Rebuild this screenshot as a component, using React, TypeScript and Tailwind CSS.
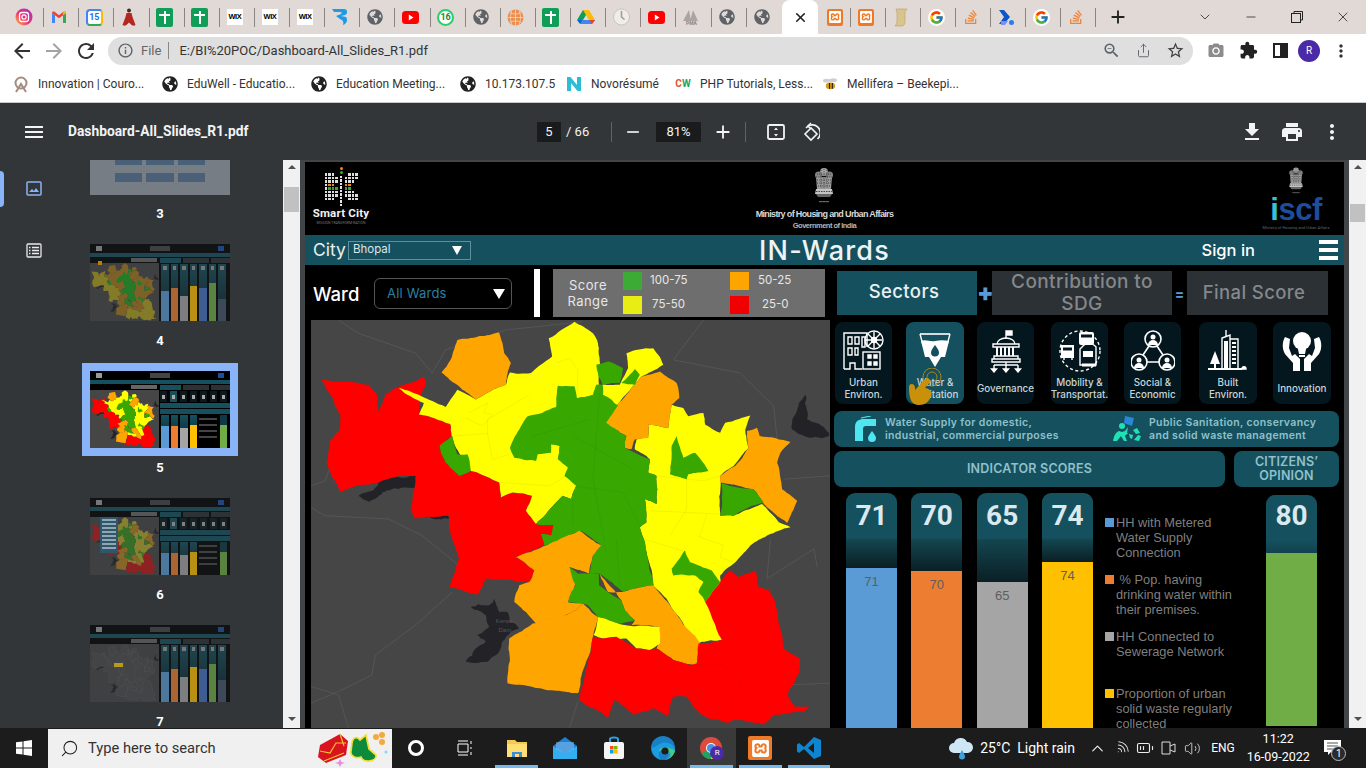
import React from 'react';
import { FaGlobeAmericas, FaStackOverflow } from 'react-icons/fa';
import { FcGoogle } from 'react-icons/fc';
import { SiXampp } from 'react-icons/si';
import {
  MdAdd, MdArrowBack, MdArrowForward, MdCameraAlt, MdExtension, MdFileDownload, MdInfoOutline,
  MdMenu, MdMoreVert, MdPrint, MdRefresh, MdRemove, MdStarBorder, MdZoomOut,
} from 'react-icons/md';
import { BatteryMedium, ChevronDown, ChevronUp, Minus, Search, Share, Volume2, Wifi, X } from 'lucide-react';

// map regions, in 3x coordinates of the map panel
const rawRegions: { c: 'r' | 'o' | 'y' | 'g'; d: string }[] = [
  { c: 'r', d: '50,180 190,195 215,225 220,275 240,225 270,205 355,170 362,190 345,228 340,285 435,315 438,350 402,380 420,430 460,470 495,455 580,490 585,535 620,520 678,530 660,575 690,615 742,618 735,650 705,645 715,680 630,715 685,755 670,790 540,780 515,828 432,805 460,720 430,620 430,590 325,598 315,570 332,470 280,470 220,490 105,518 65,430 75,365 105,330 105,285' },
  { c: 'y', d: '280,205 420,262 455,210 510,240 600,195 612,158 675,160 738,110 728,55 805,5 860,40 875,70 878,195 950,300 850,450 810,500 795,540 770,530 720,585 690,615 660,575 678,530 620,520 585,535 580,490 495,455 460,400 438,350 435,315 340,285 355,250' },
  { c: 'y', d: '960,100 1040,85 1070,135 1005,170 975,205 930,258 890,225 888,195 940,195 965,145' },
  { c: 'y', d: '1095,255 1130,265 1145,290 1190,280 1195,315 1240,340 1255,310 1330,288 1315,330 1325,385 1280,440 1240,470 1240,590 1280,590 1340,565 1365,555 1415,610 1450,625 1380,650 1330,680 1290,725 1240,770 1245,965 1185,970 1170,975 1080,840 1040,800 1000,625 1020,610 1015,540 1050,555 1050,470 1025,460 1030,420 985,390 990,360 1025,355 1025,315 1085,325' },
  { c: 'o', d: '455,60 580,38 595,100 615,130 600,195 510,240 470,210 408,158 435,120' },
  { c: 'o', d: '1060,155 1110,190 1118,235 1095,255 1085,325 1025,315 1025,355 985,360 975,390 955,385 960,350 900,310 975,205 1005,170' },
  { c: 'o', d: '1320,335 1350,325 1358,350 1450,368 1420,400 1410,430 1425,510 1470,545 1440,612 1370,555 1340,510 1240,490 1240,470 1285,440 1325,385' },
  { c: 'g', d: '755,198 805,200 812,235 860,225 870,195 888,195 890,225 935,258 900,310 960,350 955,385 1030,420 1025,460 1050,470 1050,555 1015,540 1020,610 1000,625 1020,700 1042,800 950,820 880,765 850,765 860,710 885,680 825,635 785,650 750,670 715,680 705,645 735,650 742,618 690,615 720,585 770,530 795,540 810,500 775,470 785,445 755,420 760,380 735,375 735,400 695,405 690,425 625,415 612,385 640,330 665,290 750,262' },
  { c: 'g', d: '870,135 905,125 950,145 940,190 888,195' },
  { c: 'g', d: '945,190 985,148 1000,165 985,195' },
  { c: 'g', d: '402,380 440,350 455,405 485,405 495,455 460,470 420,430' },
  { c: 'g', d: '1090,465 1095,380 1110,350 1130,415 1165,400 1205,455 1145,465 1140,480' },
  { c: 'g', d: '1245,492 1340,510 1370,550 1305,575 1280,590 1240,590' },
  { c: 'g', d: '1095,750 1135,695 1150,730 1215,755 1240,790 1195,850 1175,820 1190,790 1165,770 1100,770' },
  { c: 'o', d: '630,715 720,680 820,635 885,680 860,710 848,765 790,745 808,790 785,850 830,855 790,885 690,915 625,850 640,800 670,790 685,755' },
  { c: 'o', d: '680,915 790,885 830,855 875,895 860,955 818,1120 815,1125 700,1110 605,1095 610,960' },
  { c: 'o', d: '880,765 905,820 950,820 1040,800 1090,860 1180,975 1170,1040 1100,1025 1050,990 1060,925 975,920 985,905 955,875 945,845' },
  { c: 'g', d: '790,745 815,765 845,765 878,765 878,800 905,820 945,845 955,875 985,905 935,915 875,895 845,860 785,850 795,820 808,800' },
  { c: 'y', d: '875,895 935,915 1060,925 1060,975 1030,995 990,990 960,960 890,960 862,950' },
  { c: 'r', d: '860,955 890,960 930,955 990,990 1030,995 1050,990 1100,1025 1150,1040 1170,1035 1175,975 1245,965 1195,850 1240,790 1270,755 1295,775 1345,755 1355,805 1385,815 1405,850 1430,990 1478,1020 1475,1065 1440,1130 1460,1165 1505,1165 1490,1180 1400,1190 1370,1220 1320,1210 1280,1205 1260,1215 1200,1200 1160,1165 1140,1135 1100,1135 1085,1195 1040,1170 980,1190 925,1145 905,1200 870,1175 818,1145' },
];

const rawWater = [
  '495,865 550,860 565,840 580,880 605,880 610,910 640,930 600,955 580,1000 545,1030 480,1030 510,990 540,970 515,950 550,925 540,890',
  '160,530 220,490 250,465 330,470 330,505 290,505 190,548',
  '1455,310 1475,250 1495,225 1500,300 1565,340 1565,350 1480,345 1455,330',
  '370,592 430,582 430,600',
];

// the ward shapes have ragged edges: split long edges and nudge the midpoints.
// The nudge depends only on the midpoint, so two regions sharing an edge stay together.
function roughen(points: string, amount = 0.05) {
  const pts = points.split(' ').map(p => p.split(',').map(Number));
  const noise = (x: number, y: number) => {
    const v = Math.sin(x * 12.9898 + y * 78.233) * 43758.5453;
    return (v - Math.floor(v)) * 2 - 1;
  };
  const split = (a: number[], b: number[], out: number[][]) => {
    const len = Math.hypot(b[0] - a[0], b[1] - a[1]);
    if (len < 12) return;
    const mx = (a[0] + b[0]) / 2;
    const my = (a[1] + b[1]) / 2;
    const m = [mx + noise(mx, my) * len * amount, my + noise(my, mx) * len * amount];
    split(a, m, out);
    out.push(m);
    split(m, b, out);
  };
  const out: number[][] = [];
  pts.forEach((p, i) => {
    out.push(p);
    split(p, pts[(i + 1) % pts.length], out);
  });
  return out.map(p => `${p[0].toFixed(1)},${p[1].toFixed(1)}`).join(' ');
}

const regions = rawRegions.map(r => ({ c: r.c, d: roughen(r.d) }));
const water = rawWater.map(w => roughen(w, 0.12));

const roads = [
  'M100 0 L160 40 L330 100 L380 160 L420 90 L600 30 L830 5',
  'M1190 0 L1100 120 L1300 160 L1400 260 L1410 360',
  'M18 500 L60 485 L80 430',
  'M18 565 L60 590 L250 600 L350 650 L460 740',
  'M440 820 L330 920 L210 1010 L200 1070 L100 1120 L18 1155',
  'M18 1105 L100 1130 L130 1230',
  'M1390 660 L1380 780 L1520 690 L1530 745',
  'M815 1150 L790 1230',
  'M1430 480 L1568 470',
  'M1440 1100 L1568 1095',
];

const wards = [
  'M440 350 L545 342 L560 420 L610 405', 'M545 342 L545 300 L670 225', 'M480 295 L530 320 L560 285 L535 280 L545 250 L490 280',
  'M580 490 L730 500 L780 470', 'M1052 470 L1190 485 L1240 470', 'M1140 480 L1140 570 L1090 650', 'M1030 575 L1240 585',
  'M1012 660 L1140 700', 'M1170 650 L1250 680 L1240 715 L1280 730', 'M1200 585 L1180 650', 'M1150 1040 L1250 1040 L1305 1090 L1270 1150 L1290 1200',
  'M812 235 L815 150 L790 115 L750 130', 'M800 500 L950 520 L1000 620', 'M800 350 L980 450', 'M880 220 L860 480 L900 700', 'M680 350 L850 300', 'M800 540 L800 620', 'M930 660 L940 800',
];

const fillOf = { r: '#ff0000', o: '#ffa500', y: '#ffff00', g: '#38a800' };

function MapShapes({ palette = fillOf, boundaries = true, edge }: { palette?: Record<string, string>; boundaries?: boolean; edge?: string }) {
  return (
    <>
      {roads.map((d, i) => <path key={i} d={d} fill="none" stroke="#585858" strokeWidth="2.500" />)}
      {water.map((p, i) => <polygon key={i} points={p} fill="#222227" />)}
      {regions.map((r, i) => <polygon key={i} points={r.d} fill={palette[r.c]} stroke={edge ?? 'none'} strokeWidth={edge ? 8 : 0} />)}
      {boundaries && wards.map((d, i) => <path key={i} d={d} fill="none" stroke="#000" strokeOpacity="0.08" strokeWidth="2" />)}
    </>
  );
}

function Globe({ className = 'text-[#5f6368]' }: { className?: string }) {
  return <FaGlobeAmericas className={`w-4 h-4 ${className}`} />;
}

function TabIcon({ kind }: { kind: string }) {
  switch (kind) {
    case 'insta':
      return (
        <svg width="18" height="18" viewBox="0 0 18 18">
          <defs>
            <linearGradient id="ig" x1="0" y1="1" x2="1" y2="0">
              <stop offset="0" stopColor="#fdc04a" /><stop offset="0.45" stopColor="#f0316e" /><stop offset="1" stopColor="#a02fd0" />
            </linearGradient>
          </defs>
          <circle cx="9" cy="9" r="8.5" fill="url(#ig)" />
          <rect x="4.5" y="4.5" width="9" height="9" rx="2.5" fill="none" stroke="#fff" strokeWidth="1.3" />
          <circle cx="9" cy="9" r="2.1" fill="none" stroke="#fff" strokeWidth="1.2" />
        </svg>
      );
    case 'gmail':
      return (
        <svg width="18" height="18" viewBox="0 0 18 18">
          <path d="M2 15V5l3 2.2V15z" fill="#4285f4" />
          <path d="M13 15V7.2L16 5v10z" fill="#34a853" />
          <path d="M2 5c0-1.5 1.6-2 2.6-1.2L9 7.2l4.4-3.4C14.4 3 16 3.5 16 5l-7 5.3z" fill="#ea4335" />
          <path d="M13 7.2 16 5c0-1-.6-1.6-1.4-1.7L13 4.5z" fill="#fbbc04" />
        </svg>
      );
    case 'cal':
      return (
        <div className="w-[17px] h-[17px] bg-white border-[2px] border-[#4285f4] border-b-[#34a853] border-r-[#fbbc04] rounded-sm flex items-center justify-center text-[9px] text-[#1a73e8] font-bold leading-none">15</div>
      );
    case 'dress':
      return (
        <svg width="18" height="20" viewBox="0 0 18 20">
          <circle cx="9" cy="3.5" r="2" fill="#4a2a20" />
          <path d="M6.5 6h5l1 4 3 8c-2 1.2-3.5.6-4.5-.5L9 15.5l-2 2c-1 1.1-2.500 1.700-4.500.5l3-8z" fill="#b3271e" />
        </svg>
      );
    case 'sheet':
      return (
        <div className="w-[17px] h-[19px] bg-[#0f9d58] rounded-[2px] relative">
          <div className="absolute left-[7.5px] top-[3px] w-[2px] h-[13px] bg-white" />
          <div className="absolute left-[3px] top-[6px] w-[11px] h-[2px] bg-white" />
        </div>
      );
    case 'wix':
      return <div className="w-4 h-4 bg-white flex items-center justify-center text-[7.5px] font-bold text-black tracking-[-0.5px] font-['Liberation_Sans',sans-serif]">WIX</div>;
    case 'swirl':
      return (
        <svg width="18" height="20" viewBox="0 0 18 20">
          <path d="M1 2h12c4 0 4 5 1 6l-4 1 5 1c2 2 1 7-3 8 1-3 0-5-3-6L5 9l5-2c1-1 1-2-1-2H3z" fill="#1e9be6" />
        </svg>
      );
    case 'globe':
      return <Globe />;
    case 'yt':
      return (
        <svg width="17" height="13" viewBox="0 0 17 13">
          <rect width="17" height="13" rx="3.5" fill="#f00" />
          <path d="M6.8 3.500 11.500 6.500 6.800 9.500z" fill="#fff" />
        </svg>
      );
    case 'wa':
      return <div className="w-[17px] h-[17px] rounded-full bg-white border-[2px] border-[#25d366] flex items-center justify-center text-[9px] font-bold text-[#128c40] leading-none">16</div>;
    case 'orange':
      return (
        <svg width="17" height="17" viewBox="0 0 17 17">
          <circle cx="8.500" cy="8.500" r="8" fill="#ea8d4f" />
          <path d="M.5 8.500h16M8.500.5v16M3 3.500c3 2 8 2 11 0M3 13.500c3-2 8-2 11 0M5 1.500c-2 4-2 10 0 14M12 1.500c2 4 2 10 0 14" stroke="#f7d5bd" strokeWidth=".8" fill="none" />
        </svg>
      );
    case 'drive':
      return (
        <svg width="18" height="16" viewBox="0 0 18 16">
          <path d="M6 1h6l-6 10H0z" fill="#0f9d58" />
          <path d="M6 1h6l6 10h-6z" fill="#fbbc04" />
          <path d="M3 15l3-4h12l-3 4z" fill="#4285f4" />
          <path d="M0 11h6l-3 4z" fill="#0066da" />
          <path d="M15 15l3-4h-6z" fill="#ea4335" />
        </svg>
      );
    case 'clock':
      return (
        <svg width="17" height="18" viewBox="0 0 17 18">
          <circle cx="8.500" cy="9" r="8" fill="#efecea" stroke="#c7c3c0" />
          <path d="M8.500 3v6l3 2.500" stroke="#9c9a98" strokeWidth="1.500" fill="none" />
        </svg>
      );
    case 'pma':
      return (
        <div className="flex flex-col items-center leading-none text-[#8b8584]">
          <svg width="18" height="12" viewBox="0 0 18 12"><path d="M1 12 7 1l2 11zM8 12 11 1l5 11z" fill="#aaa5a3" /></svg>
          <span className="text-[5px] font-bold">PMA</span>
        </div>
      );
    case 'xampp':
      return <div className="w-[16px] h-[17px] bg-[#ee7a27] rounded-[2px] flex items-center justify-center"><SiXampp className="w-3 h-3 text-white" /></div>;
    case 'scroll':
      return (
        <svg width="16" height="19" viewBox="0 0 16 19">
          <path d="M3 1h11l-2 3v10c0 2-1 4-3 4H2c1-1 2-3 2-5V5z" fill="#d9c48e" stroke="#b8a269" strokeWidth=".6" />
        </svg>
      );
    case 'g':
      return <div className="w-[17px] h-[17px] rounded-full bg-white flex items-center justify-center"><FcGoogle className="w-[15px] h-[15px]" /></div>;
    case 'so':
      return <FaStackOverflow className="w-4 h-4 text-[#ef8236]" />;
    case 'pa':
      return (
        <svg width="18" height="18" viewBox="0 0 18 18">
          <path d="M2 2h5l6 7-6 7H2l5-7z" fill="#0c56c9" />
          <path d="M4 13h7l-3 4H4z" fill="#7b8ff0" />
          <circle cx="14.500" cy="14.500" r="2.500" fill="#2b7de9" />
        </svg>
      );
    default:
      return null;
  }
}

const tabsBefore = ['insta', 'gmail', 'cal', 'dress', 'sheet', 'sheet', 'wix', 'wix', 'wix', 'swirl', 'globe', 'yt', 'wa', 'globe', 'orange', 'sheet', 'drive', 'clock', 'yt', 'pma', 'globe', 'globe'];
const tabsAfter = ['xampp', 'xampp', 'scroll', 'g', 'so', 'pa', 'g', 'so'];

function TabStrip() {
  return (
    <div className="h-[34px] bg-[#e0d9d6] flex items-center pl-[9px] shrink-0">
      {tabsBefore.map((k, i) => (
        <div key={i} className="w-[35.14px] h-[34px] pr-[5px] flex items-center justify-center relative">
          <TabIcon kind={k} />
          {i < 21 && <div className="absolute right-0 top-[8px] h-[19px] w-px bg-[#8a8583]" />}
        </div>
      ))}
      <div className="w-[36.5px] h-[34px] bg-white rounded-t-lg flex items-center justify-center">
        <X className="w-[15px] h-[15px] text-[#222]" strokeWidth={2.5} />
      </div>
      {tabsAfter.map((k, i) => (
        <div key={i} className={`${i === 0 ? 'w-[33px] pr-0' : 'w-[35px] pr-[5px]'} h-[34px] flex items-center justify-center relative`}>
          <TabIcon kind={k} />
          <div className="absolute right-0 top-[8px] h-[19px] w-px bg-[#8a8583]" />
        </div>
      ))}
      <div className="w-[11px]" />
      <MdAdd className="w-[22px] h-[22px] text-[#222]" />
      <div className="flex-1" />
      <div className="w-[46px] flex justify-center"><ChevronDown className="w-[16px] h-[16px] text-[#333]" strokeWidth={1.3} /></div>
      <div className="w-[46px] flex justify-center"><Minus className="w-[14px] h-[14px] text-[#222]" strokeWidth={1.3} /></div>
      <div className="w-[46px] flex justify-center">
        <svg width="12" height="12" viewBox="0 0 12 12" fill="none" stroke="#222"><rect x=".5" y="2.500" width="9" height="9" /><path d="M3 2.500V.5h8.500v8.500h-2" /></svg>
      </div>
      <div className="w-[46px] flex justify-center"><X className="w-[16px] h-[16px] text-[#222]" strokeWidth={1.2} /></div>
    </div>
  );
}

function Toolbar() {
  return (
    <div className="h-[33px] bg-white flex items-center shrink-0 pl-[10px]">
      <MdArrowBack className="w-6 h-6 text-[#333]" />
      <MdArrowForward className="w-6 h-6 text-[#a3a3a3] ml-2" />
      <MdRefresh className="w-6 h-6 text-[#333] ml-2" />
      <div className="ml-[10px] w-[1085px] h-[28px] rounded-full bg-[#dfdfdf] flex items-center pl-[9px] pr-[8px] text-[13px]">
        <MdInfoOutline className="w-[17px] h-[17px] text-[#5f6368]" />
        <span className="ml-[7px] text-[#666]">File</span>
        <div className="ml-[7px] w-px h-[17px] bg-[#888]" />
        <span className="ml-[10px] text-[#333]">E:/BI%20POC/Dashboard-All_Slides_R1.pdf</span>
        <div className="flex-1" />
        <MdZoomOut className="w-[19px] h-[19px] text-[#5f6368]" />
        <Share className="w-[15px] h-[15px] text-[#5f6368] ml-[15px]" strokeWidth={1.5} />
        <MdStarBorder className="w-[19px] h-[19px] text-[#444] ml-[15px]" />
      </div>
      <MdCameraAlt className="w-[18px] h-[18px] text-[#8c8c8c] ml-[14px]" />
      <MdExtension className="w-[19px] h-[19px] text-[#222] ml-[14px]" />
      <div className="w-[15px] h-[15px] border-[2px] border-[#222] ml-[15px] flex justify-end"><div className="w-[6px] h-full bg-[#222]" /></div>
      <div className="w-[22px] h-[22px] rounded-full bg-[#4b2aa8] text-white text-[10px] flex items-center justify-center ml-[10px]">R</div>
      <MdMoreVert className="w-[20px] h-[20px] text-[#333] ml-[11px]" />
    </div>
  );
}

function Bookmarks() {
  const items = [
    { w: 'w-[149px]', t: 'Innovation | Couro...', icon: <svg width="16" height="17" viewBox="0 0 16 17" fill="none" stroke="#a38d80" strokeWidth="2"><circle cx="8" cy="7" r="5.500" /><path d="M3 16 8 8l5 8" /></svg> },
    { w: 'w-[149px]', t: 'EduWell - Educatio...', icon: <Globe className="text-[#222]" /> },
    { w: 'w-[149px]', t: 'Education Meeting...', icon: <Globe className="text-[#222]" /> },
    { w: 'w-[106px]', t: '10.173.107.5', icon: <Globe className="text-[#222]" /> },
    { w: 'w-[109px]', t: 'Novorésumé', icon: <svg width="16" height="16" viewBox="0 0 16 16"><path d="M1 1h3.500L11 9V1h4v14h-3.500L5 7v8H1z" fill="#2cbcd6" /></svg> },
    { w: 'w-[147px]', t: 'PHP Tutorials, Less...', icon: <span className="text-[10px] font-bold leading-none"><span className="text-[#e2552b]">C</span><span className="text-[#1e9f6a]">W</span></span> },
    { w: 'w-[160px]', t: 'Mellifera – Beekepi...', icon: <svg width="17" height="14" viewBox="0 0 17 14"><ellipse cx="9" cy="9" rx="5" ry="3.500" fill="#d99a1d" /><path d="M8 6v6M11 6v6" stroke="#222" strokeWidth="1.200" /><ellipse cx="5" cy="3.500" rx="4" ry="2" fill="#cfcfcf" /><ellipse cx="12" cy="3" rx="4" ry="2" fill="#cfcfcf" /></svg> },
  ];
  return (
    <div className="h-[36px] bg-white border-b border-[#c9c9c9] flex items-center pl-[13px] pb-px text-[12px] text-[#333] shrink-0">
      {items.map(it => (
        <div key={it.t} className={`${it.w} flex items-center gap-[9px] shrink-0`}>
          <div className="w-4 flex justify-center shrink-0">{it.icon}</div>
          <span className="whitespace-nowrap">{it.t}</span>
        </div>
      ))}
    </div>
  );
}

function PdfToolbar() {
  return (
    <div className="h-[57px] bg-[#323639] flex items-center text-[#f1f3f4] shrink-0">
      <MdMenu className="w-6 h-6 ml-[22px]" />
      <span className="ml-[22px] text-[13.800px] font-bold w-[469px] whitespace-nowrap">Dashboard-All_Slides_R1.pdf</span>
      <div className="w-[24px] h-[20px] bg-[#191b1c] flex items-center justify-center text-[13px]">5</div>
      <span className="ml-[5px] text-[13px] w-[45px]">/ 66</span>
      <div className="w-px h-[20px] bg-[#5f6368]" />
      <MdRemove className="w-[20px] h-[20px] ml-[11px]" />
      <div className="ml-[13px] w-[45px] h-[20px] bg-[#191b1c] flex items-center justify-center text-[13px]">81%</div>
      <MdAdd className="w-[22px] h-[22px] ml-[11px]" />
      <div className="w-px h-[20px] bg-[#5f6368] ml-[11px]" />
      <svg className="ml-[21px]" width="18" height="18" viewBox="0 0 18 18" fill="none" stroke="#f1f3f4" strokeWidth="1.800">
        <rect x="1" y="2" width="16" height="14" rx="1.500" />
        <path d="M9 4.500 11 7H7zM9 13.500 11 11H7z" fill="#f1f3f4" stroke="none" />
      </svg>
      <svg className="ml-[17px]" width="18" height="20" viewBox="0 0 18 20" fill="none" stroke="#f1f3f4" strokeWidth="1.600">
        <path d="M9 6 3 12l6 6 6-6z" />
        <path d="M4 6A8 8 0 1 1 15.500 17" />
        <path d="M9 1 6 4l3 3" />
      </svg>
      <div className="flex-1" />
      <MdFileDownload className="w-6 h-6 mr-[16px]" />
      <MdPrint className="w-6 h-6 mr-[16px]" />
      <MdMoreVert className="w-6 h-6 mr-[22px]" />
    </div>
  );
}

function MiniSlide({ mode }: { mode: 'dim4' | 'active' | 'dim6' | 'dim7' }) {
  const seven = mode === 'dim4' || mode === 'dim7';
  const palette4 = { r: '#b0a020', o: '#a8781c', y: '#a8781c', g: '#20a020' };
  const palette6 = { r: '#c01818', o: '#b5801f', y: '#b5a82c', g: '#3a8f1f' };
  const blank = { r: '#4c4c4c', o: '#4c4c4c', y: '#4c4c4c', g: '#4c4c4c' };
  const palette = mode === 'dim4' ? palette4 : mode === 'dim6' ? palette6 : mode === 'dim7' ? blank : fillOf;
  const colors = seven
    ? ['#5b9bd5', '#ed7d31', '#a5a5a5', '#ffc000', '#4472c4', '#70ad47', '#44546a']
    : ['#5b9bd5', '#ed7d31', '#a5a5a5', '#ffc000'];
  const heights = seven ? ['h-[52%]', 'h-[58%]', 'h-[44%]', 'h-[62%]', 'h-[58%]', 'h-[66%]', 'h-[38%]'] : ['h-[68%]', 'h-[66%]', 'h-[62%]', 'h-[70%]'];
  return (
    <div className="w-[140px] h-[77px] bg-black relative overflow-hidden flex flex-col shrink-0">
      <div className="h-[9px] flex items-center justify-between px-[6px]">
        <div className="w-[6px] h-[5px] bg-[#999]" />
        <div className="w-[20px] h-[5px] bg-[#444]" />
        <div className="w-[6px] h-[5px] bg-[#1d4d9e]" />
      </div>
      <div className="h-[4px] bg-[#15505e]" />
      <div className="flex flex-1 min-h-0">
        <div className="w-[70px] flex flex-col">
          <div className="h-[6px] flex items-center justify-end pr-[2px]"><div className="w-[26px] h-[4px] bg-[#666]" /></div>
          <svg className="w-full flex-1" viewBox="18 0 1550 1230" preserveAspectRatio="none">
            <rect x="18" width="1550" height="1230" fill="#464646" />
            <MapShapes palette={palette} boundaries={false} edge={mode === 'dim7' ? '#6a6a6a' : undefined} />
          </svg>
        </div>
        <div className="flex-1 flex flex-col pl-px">
          <div className="h-[6px] flex gap-[2px] items-center">
            <div className="w-[21px] h-[5px] bg-[#15505e]" /><div className="w-[26px] h-[5px] bg-[#2b3135]" /><div className="w-[19px] h-[5px] bg-[#2b3135]" />
          </div>
          {!seven && (
            <>
              <div className="h-[11px] flex gap-[3px] mt-px">
                {[0, 1, 2, 3, 4, 5, 6].map(i => <div key={i} className={`w-[7px] ${i === 1 ? 'bg-[#15505e]' : 'bg-[#0c1a1e]'} flex items-center justify-center`}><div className="w-[3px] h-[4px] bg-[#aaa]" /></div>)}
              </div>
              <div className="h-[5px] mt-px bg-[#15505e]" />
              <div className="h-[5px] mt-px bg-[#15505e]" />
            </>
          )}
          <div className="flex-1 flex gap-[2px] items-stretch mt-px px-px">
            {colors.map((c, i) => (
              <div key={i} className="w-[7.500px] flex flex-col justify-end bg-[linear-gradient(#15505e,#0a1a20)] relative">
                {seven && <div className="absolute top-[2px] left-[2px] w-[3.500px] h-[4px] bg-[#999]" />}
                <div className={heights[i]} style={{ backgroundColor: c }} />
              </div>
            ))}
            {!seven && (
              <>
                <div className="w-[18px] flex flex-col gap-[4px] pt-[3px]">
                  {[0, 1, 2, 3].map(i => <div key={i} className="h-[2px] bg-[#444]" />)}
                </div>
                <div className="w-[7px] flex flex-col justify-end bg-[#0f3844] ml-auto mr-[2px]"><div className="h-[70%] bg-[#70ad47]" /></div>
              </>
            )}
          </div>
        </div>
      </div>
      {mode !== 'active' && <div className="absolute inset-0 bg-[#323639]/35" />}
      {mode === 'dim6' && (
        <div className="absolute left-[10px] top-[19px] w-[18px] h-[36px] bg-[#31566a] flex flex-col gap-[2px] p-[2px]">
          {[0, 1, 2, 3, 4, 5, 6, 7].map(i => <div key={i} className="h-[2px] bg-[#8fa7b3]" />)}
        </div>
      )}
      {mode === 'dim7' && <div className="absolute left-[24px] top-[38px] w-[9px] h-[4px] bg-[#b89a1c]" />}
      {mode === 'dim4' && <div className="absolute left-[8px] top-[17px] w-[4px] h-[4px] bg-[#b57f10]" />}
    </div>
  );
}

function Sidebar() {
  const label = 'h-[38px] flex items-center justify-center pt-[2px] text-white text-[13px] font-bold shrink-0';
  return (
    <div className="w-[300px] bg-[#323639] flex shrink-0 overflow-hidden">
      <div className="w-[68px] relative shrink-0">
        <div className="absolute left-0 top-[11px] w-[4px] h-[36px] bg-[#8ab4f8] rounded-r" />
        <div className="flex flex-col items-center pt-[21px] gap-[47px]">
          <svg width="16" height="15" viewBox="0 0 16 15" fill="none" stroke="#8ab4f8" strokeWidth="1.500">
            <rect x="1" y="1" width="14" height="13" rx="1" />
            <path d="M3 11l3-3 2 2 2-3 3 4z" fill="#8ab4f8" stroke="none" />
          </svg>
          <svg width="16" height="15" viewBox="0 0 16 15" fill="none" stroke="#e8eaed" strokeWidth="1.300">
            <rect x="1" y="1" width="14" height="13" rx="1" />
            <path d="M6 4.500h7M6 7.500h7M6 10.500h7M3 4.500h1.500M3 7.500h1.500M3 10.500h1.500" strokeWidth="1.500" />
          </svg>
        </div>
      </div>
      <div className="w-[215px] flex flex-col shrink-0 pl-[22px]">
        <div className="w-[140px] h-[35px] bg-[#767d84] shrink-0 flex flex-col gap-[6px] px-[25px] overflow-hidden">
          <div className="flex gap-[4px]">
            {[0, 1, 2].map(i => <div key={i} className="flex-1 h-[5px] bg-[#4a6078]" />)}
          </div>
          <div className="flex gap-[4px] mt-[2px]">
            {[0, 1, 2].map(i => <div key={i} className="flex-1 h-[9px] bg-[#4a6078]" />)}
          </div>
        </div>
        <div className="h-[49px] w-[140px] flex items-start justify-center pt-[9px] text-white text-[13px] font-bold shrink-0">3</div>
        <MiniSlide mode="dim4" />
        <div className="h-[50px] w-[140px] pt-[10px] flex items-start justify-center text-white text-[13px] font-bold shrink-0">4</div>
        <div className="outline-8 outline-[#8ab4f8] w-[140px] shrink-0"><MiniSlide mode="active" /></div>
        <div className={`${label} w-[140px]`}>5</div>
        <div className="h-[12px] shrink-0" />
        <MiniSlide mode="dim6" />
        <div className={`${label} w-[140px]`}>6</div>
        <div className="h-[12px] shrink-0" />
        <MiniSlide mode="dim7" />
        <div className={`${label} w-[140px]`}>7</div>
      </div>
      <Scrollbar thumb="mt-[18px] h-[25px]" />
    </div>
  );
}

function Scrollbar({ thumb }: { thumb: string }) {
  return (
    <div className="w-[17px] bg-[#f1f1f1] flex flex-col items-center shrink-0 relative">
      <div className="mt-[5px] w-0 h-0 border-x-[4px] border-x-transparent border-b-[4px] border-b-[#505050]" />
      <div className={`${thumb} w-[15px] bg-[#c1c1c1]`} />
      <div className="flex-1" />
      <div className="mb-[7px] w-0 h-0 border-x-[4px] border-x-transparent border-t-[4px] border-t-[#505050]" />
    </div>
  );
}

function Emblem({ className }: { className?: string }) {
  return (
    <svg className={className} viewBox="0 0 24 38" fill="#8f8f8f">
      <circle cx="12" cy="5" r="4" fill="#a5a5a5" />
      <circle cx="6.500" cy="8" r="3.500" fill="#858585" />
      <circle cx="17.500" cy="8" r="3.500" fill="#858585" />
      <path d="M4 10h16l-1 12H5z" fill="#9a9a9a" />
      <path d="M5 7h14M4 10h16M5 13h14M5 16h14M6 19h12M9 3v18M12 2v20M15 3v18" stroke="#2c2c2c" strokeWidth=".8" strokeDasharray="1 1.200" />
      <path d="M4 22h16l1 5H3z" fill="#c4c4c4" />
      <path d="M4 24.500h16" stroke="#444" strokeWidth="1" strokeDasharray="1.500 1" />
      <path d="M4 27h16l-2 3H6z" fill="#666" />
      <rect x="7" y="34" width="10" height="1.200" fill="#666" />
    </svg>
  );
}

function SmartCityMark() {
  // left and right blocks of the dot mark
  const left = ['1110', '1111', '1111', '1110', '1111', '1111', '1111', '1110'];
  const right = ['0111', '1111', '1110', '1100', '1100', '1110', '1111', '0111'];
  const dotClass = (row: number, col: number, mirror: boolean) => {
    const inner = mirror ? col < 3 : col > 0;
    if (row === 3 && inner) return 'bg-[#e58a1f]';
    if (row === 4 && inner) return 'bg-[#3aa435]';
    return 'bg-[#dedede]';
  };
  const block = (rows: string[], mirror: boolean) => (
    <div className="flex flex-col gap-px">
      {rows.map((r, ri) => (
        <div key={ri} className="flex gap-px">
          {r.split('').map((c, ci) => <div key={ci} className={`w-[2.500px] h-[2.500px] ${c === '1' ? dotClass(ri, ci, mirror) : 'bg-transparent'}`} />)}
        </div>
      ))}
    </div>
  );
  return (
    <div className="flex items-center gap-[2px] h-[37px]">
      {block(left, false)}
      <div className="flex flex-col items-center gap-px">
        <div className="w-[3px] h-[3px] rounded-full bg-[#e58a1f]" />
        <div className="w-[3px] h-[3px] rounded-full bg-[#3aa435] mb-[1px]" />
        {[0, 1, 2, 3, 4, 5, 6, 7, 8].map(i => <div key={i} className="w-[2.500px] h-[2.500px] bg-[#e6e6e6]" />)}
      </div>
      {block(right, true)}
    </div>
  );
}

function SlideHeader() {
  return (
    <div className="h-[73px] bg-black grid grid-cols-[1fr_auto_1fr] shrink-0">
      <div className="pl-[7px] flex flex-col items-start">
        <div className="w-[58px] flex flex-col items-center pt-[6px]">
          <SmartCityMark />
          <span className="text-[11.500px] font-bold text-[#f2f2f2] leading-[13px] mt-[2px] whitespace-nowrap tracking-[0.2px]">Smart City</span>
          <span className="text-[3.500px] text-[#777] leading-[6px] whitespace-nowrap">MISSION TRANSFORM-NATION</span>
        </div>
      </div>
      <div className="flex flex-col items-center pt-[5px]">
        <Emblem className="w-[24px] h-[38px]" />
        <span className="mt-[3px] text-[9px] font-bold text-[#d9d9d9] leading-[12px] tracking-[-0.65px] font-['Liberation_Sans',sans-serif] whitespace-nowrap">Ministry of Housing and Urban Affairs</span>
        <span className="text-[7.500px] font-bold text-[#b5b5b5] leading-[11px] tracking-[-0.5px] font-['Liberation_Sans',sans-serif]">Government of India</span>
      </div>
      <div className="flex justify-end pr-[20px]">
        <div className="flex flex-col items-center w-[56px] pt-[4px]">
          <Emblem className="w-[18px] h-[30px]" />
          <span className="text-[31px] font-bold leading-[25px] tracking-[-0.5px] font-['Liberation_Sans',sans-serif] text-[#1d4d9e] mt-[1px]"><span className="text-[#36c1d8]">i</span>scf</span>
          <span className="mt-[3px] text-[4px] text-[#666] leading-[5px] whitespace-nowrap">Ministry of Housing and Urban Affairs</span>
        </div>
      </div>
    </div>
  );
}

function TitleBar() {
  return (
    <div className="h-[30px] bg-[#15505e] grid grid-cols-[1fr_auto_1fr] items-center shrink-0 font-['Inter',sans-serif] text-white">
      <div className="flex items-center pl-[8px]">
        <span className="text-[17.500px] text-[#e9f0f2] leading-none">City</span>
        <div className="ml-[2px] w-[123px] h-[19px] border border-[#5f8f9a] flex items-center justify-between pl-[4px] pr-[8px]">
          <span className="text-[11.500px] text-[#dbe7ea]">Bhopal</span>
          <div className="w-0 h-0 border-x-[5.500px] border-x-transparent border-t-[9px] border-t-white" />
        </div>
      </div>
      <span className="text-[27px] font-medium tracking-[1.200px] text-[#eef3f4] leading-none">IN-Wards</span>
      <div className="flex items-center justify-end pr-[6px]">
        <span className="text-[16.500px] font-medium leading-none">Sign in</span>
        <div className="ml-[64px] w-[19px] flex flex-col gap-[4px]">
          <div className="h-[4px] bg-white" /><div className="h-[4px] bg-white" /><div className="h-[4px] bg-white" />
        </div>
      </div>
    </div>
  );
}

function ScoreRange() {
  const sw = (cls: string) => <div className={`w-[19px] h-[18px] ${cls}`} />;
  return (
    <div className="ml-[13px] w-[272px] h-[48px] bg-[#6e6e6e] flex items-center text-[#e6e6e6] text-[11.500px]">
      <div className="w-[70px] text-center text-[13px] leading-[16px] tracking-[0.4px]">Score<br />Range</div>
      <div className="grid grid-cols-[107px_90px] gap-y-[6px]">
        <div className="flex items-center">{sw('bg-[#3cab35]')}<span className="ml-[8px]">100-75</span></div>
        <div className="flex items-center">{sw('bg-[#ffa500]')}<span className="ml-[9px]">50-25</span></div>
        <div className="flex items-center">{sw('bg-[#e8ed13]')}<span className="ml-[10px]">75-50</span></div>
        <div className="flex items-center">{sw('bg-[#f00000]')}<span className="ml-[13px]">25-0</span></div>
      </div>
    </div>
  );
}

function WardMap() {
  return (
    <svg className="ml-[6px] w-[519px] h-[410px] block" viewBox="18 0 1550 1230" preserveAspectRatio="none">
      <rect x="18" width="1550" height="1230" fill="#464646" />
      <MapShapes />
      <text x="595" y="914" fontSize="18" fill="#55555b" textAnchor="middle" fontFamily="Liberation Sans">Kerwa</text>
      <text x="597" y="940" fontSize="18" fill="#55555b" textAnchor="middle" fontFamily="Liberation Sans">Dam</text>
    </svg>
  );
}

const iconProps = { width: 44, height: 44, viewBox: '0 0 44 44', fill: 'none', stroke: '#fff', strokeWidth: 1.400 };

function SectorIcon({ name }: { name: string }) {
  switch (name) {
    case 'urban':
      return (
        <svg {...iconProps}>
          <path d="M2 40V4h23v14M2 40h6v-6h5v6h7" />
          <path d="M6 8h4v7H6zM13 8h4v7h-4zM20 8h3v10h-3zM6 19h4v7H6zM13 19h3v7h-3z" />
          <rect x="21" y="23" width="17" height="17" />
          <path d="M26 26h3v3h-3zM32 26h3v3h-3zM26 33h3v3h-3zM32 33h3v3h-3z" fill="#fff" />
          <circle cx="32" cy="11" r="9" />
          <path d="M32 3v16M24 11h16M26 5l12 12M38 5 26 17" />
          <circle cx="32" cy="11" r="2.500" fill="#fff" />
        </svg>
      );
    case 'water':
      return (
        <svg {...iconProps} strokeWidth={1.400}>
          <path d="M7 5h30" strokeWidth="1.600" />
          <path d="M8 12c5-2 9 1 14 0s9-1 14 0l-4 16h-4l-6 10-6-10h-4z" fill="#fff" stroke="none" />
          <path d="M22 16c2 3 4 5 4 7.500a4 4 0 0 1-8 0c0-2.500 2-4.500 4-7.500z" fill="#15505e" stroke="none" />
          <path d="M7 5l3 11M37 5l-3 11" />
        </svg>
      );
    case 'gov':
      return (
        <svg {...iconProps}>
          <path d="M22 2v8M22 2h6v4h-6z" fill="#fff" />
          <path d="M13 15a9 6 0 0 1 18 0zM9 15h26v3H9zM10 27h24v3H10zM8 30h28v3H8z" />
          <path d="M13 18v9M17 18v9M21 18v9M25 18v9M29 18v9" strokeWidth="2" />
          <path d="M22 33v9M10 36h24M10 36v5M34 36v5" />
          <path d="M7.500 40h5L10 43zM19.500 40h5L22 43zM31.500 40h5L34 43z" fill="#fff" />
        </svg>
      );
    case 'mobility':
      return (
        <svg {...iconProps}>
          <circle cx="22" cy="22" r="20" strokeDasharray="3 2.500" />
          <rect x="21" y="3" width="15" height="13" rx="2" fill="#fff" stroke="none" />
          <path d="M23 7h11" stroke="#04171e" strokeWidth="3" />
          <path d="M3 16h13v13H3z" fill="#fff" stroke="none" />
          <path d="M5 20h9" stroke="#04171e" strokeWidth="3" />
          <path d="M6 29v2M14 29v2M24 18a9 9 0 0 1 14 0v18H22V20z" />
          <path d="M25 22h10v6H25z" fill="#fff" stroke="none" />
          <path d="M24 36h14" strokeWidth="3" />
        </svg>
      );
    case 'social':
      return (
        <svg {...iconProps} strokeWidth={1.600}>
          <circle cx="22" cy="10" r="8" /><circle cx="8" cy="33" r="8" /><circle cx="36" cy="33" r="8" />
          <path d="M18 17 12 26M26 17l6 9M16 33h12" />
          {[[22, 8], [8, 31], [36, 31]].map(([x, y]) => (
            <g key={x}>
              <circle cx={x} cy={y} r="2.500" fill="#fff" stroke="none" />
              <path d={`M${x - 5} ${y + 8}a5 5 0 0 1 10 0z`} fill="#fff" stroke="none" />
            </g>
          ))}
        </svg>
      );
    case 'built':
      return (
        <svg {...iconProps}>
          <path d="M20 1v6M16 40V9l8-3v34zM24 10h8v30" />
          <path d="M18 12h4v27h-4z" fill="#fff" stroke="none" />
          <path d="M26 14h4M26 18h4M26 22h4M26 26h4M26 30h4M26 34h4" strokeWidth="1.800" />
          <path d="M9 22 14 35H4z" fill="#fff" stroke="none" />
          <path d="M9 35v5M2 40h34" strokeWidth="2" />
          <path d="M36 40c0-3 4-3 4 0z" fill="#fff" />
        </svg>
      );
    default:
      return (
        <svg {...iconProps}>
          <circle cx="22" cy="12" r="9" fill="#fff" stroke="none" />
          <path d="M18 20h8l-1 5h-6z" fill="#fff" stroke="none" />
          <path d="M19 27h6" strokeWidth="2" />
          <path d="M5 8c-3 5-3 12 0 17l8 9v8h7V30l-5-5-3 2-3-8 1-9z" fill="#fff" stroke="none" />
          <path d="M39 8c3 5 3 12 0 17l-8 9v8h-7V30l5-5 3 2 3-8-1-9z" fill="#fff" stroke="none" />
        </svg>
      );
  }
}

const sectors = [
  { n: 'urban', t: ['Urban', 'Environ.'], w: 'w-[57px]', ml: 'ml-[4px]' },
  { n: 'water', t: ['Water &', 'Sanitation'], w: 'w-[58px]', ml: 'ml-[14px]' },
  { n: 'gov', t: ['Governance'], w: 'w-[57px]', ml: 'ml-[13px]' },
  { n: 'mobility', t: ['Mobility &', 'Transportat.'], w: 'w-[57px]', ml: 'ml-[17px]' },
  { n: 'social', t: ['Social &', 'Economic'], w: 'w-[57px]', ml: 'ml-[16px]' },
  { n: 'built', t: ['Built', 'Environ.'], w: 'w-[58px]', ml: 'ml-[18px]' },
  { n: 'inno', t: ['Innovation'], w: 'w-[58px]', ml: 'ml-[16px]' },
];

function SectorTiles() {
  return (
    <div className="flex mt-[7px] h-[82px] shrink-0">
      {sectors.map(s => (
        <div key={s.n} className={`${s.w} ${s.ml} h-full rounded-lg ${s.n === 'water' ? 'bg-[#15505e]' : 'bg-[#04171e]'} flex flex-col items-center pt-[7px] relative shrink-0`}>
          <SectorIcon name={s.n} />
          <div className="flex-1 flex flex-col items-center justify-center text-[9.800px] leading-[11.500px] text-[#c8d6da] font-medium whitespace-nowrap">
            {s.t.map(l => <span key={l}>{l}</span>)}
          </div>
          {s.n === 'water' && (
            <svg className="absolute left-[1px] top-[46px]" width="36" height="38" viewBox="0 0 36 38">
              <circle cx="25" cy="9" r="5" fill="none" stroke="#c9910a" strokeWidth=".8" />
              <circle cx="25" cy="9" r="9" fill="none" stroke="#c9910a" strokeWidth=".8" />
              <path d="M2 19c0-4 6-4 6 1v2l10-11c3-3 7 1 4 4l-4 5c4 0 8 4 6 8-2 6-6 9-12 9-7 0-10-5-10-18z" fill="#c9910a" />
            </svg>
          )}
        </div>
      ))}
    </div>
  );
}

function InfoBar() {
  return (
    <div className="mt-[7px] ml-[3px] w-[505px] h-[36px] bg-[#15505e] rounded-lg flex items-center text-[#8fc1cc] text-[10.500px] font-semibold leading-[13px] tracking-[0.35px] shrink-0">
      <svg className="ml-[19px]" width="24" height="26" viewBox="0 0 24 26">
        <path d="M2 25V11c0-6 4-8 9-8h12v7H13c-2 0-3 1-3 3v12z" fill="#4fe6ef" />
        <path d="M8 2 18 0" stroke="#4fe6ef" strokeWidth="1.200" />
        <path d="M19 15c2 3 4 5 4 7a4 4 0 0 1-8 0c0-2 2-4 4-7z" fill="#4fe6ef" />
      </svg>
      <div className="ml-[8px] w-[226px] whitespace-nowrap">Water Supply for domestic,<br />industrial, commercial purposes</div>
      <svg width="32" height="28" viewBox="0 0 32 28">
        <path d="M14 1 23 3l-2 8-8-3z" fill="#2a86d8" />
        <circle cx="11" cy="11" r="3" fill="#1de2b6" />
        <path d="M2 26c1-6 3-9 6-10l3 1 3-1 3-4-1 6c3 1 0 0-2 3l2 5h-3l-3-5-4 5z" fill="#1de2b6" />
        <path d="M22 15l4-2 3 5-4 1zM19 23l-1-4 4 1-1 4zM27 20l3 1-2 5-5-1z" fill="#1de2b6" />
      </svg>
      <div className="ml-[6px] whitespace-nowrap">Public Sanitation, conservancy<br />and solid waste management</div>
    </div>
  );
}

const bars = [
  { v: 71, c: 'bg-[#5b9bd5]', h: 'h-[75px]' },
  { v: 70, c: 'bg-[#ed7d31]', h: 'h-[78px]' },
  { v: 65, c: 'bg-[#a5a5a5]', h: 'h-[89px]' },
  { v: 74, c: 'bg-[#ffc000]', h: 'h-[69px]' },
];

const legend = [
  { c: 'bg-[#5b9bd5]', t: 'HH with Metered Water Supply Connection' },
  { c: 'bg-[#ed7d31]', t: '\u00a0% Pop. having drinking water within their premises.' },
  { c: 'bg-[#a5a5a5]', t: 'HH Connected to Sewerage Network' },
  { c: 'bg-[#ffc000]', t: 'Proportion of urban solid waste regularly collected' },
];

function BarHead({ v, h }: { v: number; h: string }) {
  return (
    <div className={`${h} shrink-0 rounded-t-[9px] bg-[linear-gradient(#15505e_0px,#15505e_45px,#13454f_47px,#0b1f25_100%)] flex justify-center pt-[5px] text-[28px] leading-[36px] font-bold text-[#dbe9ee] font-['Roboto',sans-serif]`}>
      {v}
    </div>
  );
}

function Bars() {
  return (
    <div className="flex mt-[6px] pl-[15px] flex-1 min-h-0 font-['Liberation_Sans',sans-serif]">
      <div className="flex gap-[14.330px]">
        {bars.map(b => (
          <div key={b.v} className="w-[51px] flex flex-col">
            <BarHead v={b.v} h={b.h} />
            <div className={`flex-1 ${b.c} text-center text-[13px] text-[#5f5f5f] pt-[6px] leading-[16px]`}>{b.v}</div>
          </div>
        ))}
      </div>
      <div className="ml-[12px] w-[132px] pt-[22px] text-[12.800px] leading-[15px] text-[#7f7f7f]">
        {legend.map(l => (
          <div key={l.t} className="h-[57px] flex">
            <div className={`w-[9px] h-[9px] mt-[3px] shrink-0 ${l.c}`} />
            <span className="ml-[2px]">{l.t}</span>
          </div>
        ))}
      </div>
      <div className="ml-[29px] w-[51px] flex flex-col pt-[2px] pb-[2px]">
        <div className="h-[58px] shrink-0 rounded-t-[9px] bg-[linear-gradient(#15505e_0%,#15505e_78%,#12414d_100%)] flex justify-center pt-[3px] text-[28px] leading-[36px] font-bold text-[#dbe9ee] font-['Roboto',sans-serif]">80</div>
        <div className="flex-1 bg-[#70ad47]" />
      </div>
    </div>
  );
}

function Slide() {
  return (
    <div className="w-[1039px] h-[566px] bg-black flex flex-col overflow-hidden shrink-0">
      <SlideHeader />
      <TitleBar />
      <div className="flex flex-1 min-h-0 font-['Inter',sans-serif]">
        <div className="w-[526px] shrink-0 flex flex-col">
          <div className="h-[55px] flex items-center pl-[8px] shrink-0">
            <span className="text-[18.500px] font-medium text-white w-[61px] pt-[4px]">Ward</span>
            <div className="w-[138px] h-[31px] mt-[2px] border border-[#555] rounded-md flex items-center justify-between pl-[12px] pr-[6px]">
              <span className="text-[13px] text-[#2c7fa3] tracking-[0.2px]">All Wards</span>
              <div className="w-0 h-0 border-x-[6px] border-x-transparent border-t-[10px] border-t-white" />
            </div>
            <div className="ml-[22px] w-[6px] h-[48px] bg-white" />
            <ScoreRange />
          </div>
          <WardMap />
        </div>
        <div className="flex-1 flex flex-col">
          <div className="flex items-center mt-[6px] ml-[6px] h-[44px] shrink-0">
            <div className="w-[140px] h-full pb-[3px] pr-[6px] bg-[#15505e] flex items-center justify-center text-[18.500px] font-medium tracking-[0.4px] text-[#e8f0f2]">Sectors</div>
            <div className="w-[15px] text-center text-[24px] font-black text-[#5b9bd5] leading-none">+</div>
            <div className="w-[180px] h-full bg-[#2b3135] flex items-center justify-center text-center text-[19px] leading-[22px] font-medium tracking-[0.4px] text-[#84888b]">Contribution to<br />SDG</div>
            <div className="w-[15px] text-center text-[14px] font-bold text-[#5b9bd5]">=</div>
            <div className="w-[141px] h-full pr-[7px] bg-[#2b3135] flex items-center justify-center text-[18.500px] font-medium tracking-[0.4px] text-[#84888b]">Final Score</div>
          </div>
          <SectorTiles />
          <InfoBar />
          <div className="mt-[4px] ml-[3px] flex h-[36px] shrink-0 text-[#8fc0cb] font-semibold">
            <div className="w-[391px] bg-[#15505e] rounded-lg flex items-center justify-center text-[12.500px] tracking-[0.2px]">INDICATOR SCORES</div>
            <div className="ml-[9px] w-[105px] bg-[#15505e] rounded-lg flex items-center justify-center text-center text-[12.500px] leading-[14px] tracking-[0.2px]">CITIZENS&rsquo;<br />OPINION</div>
          </div>
          <Bars />
        </div>
      </div>
    </div>
  );
}

function Taskbar() {
  const slot = 'w-[48.700px] h-[40px] flex items-center justify-center relative shrink-0';
  const under = <div className="absolute bottom-0 left-[3px] right-[3px] h-[3px] bg-[#76b9ed]" />;
  return (
    <div className="h-[40px] bg-[#1c1c1c] flex items-center shrink-0 text-white font-['Roboto',sans-serif]">
      <div className="w-[48px] flex justify-center">
        <svg width="16" height="16" viewBox="0 0 16 16" fill="#fff"><path d="M0 2.300 6.500 1.400V7.500H0zM7.500 1.200 16 0V7.500H7.500zM0 8.500H6.500V14.600L0 13.700zM7.500 8.500H16V16L7.500 14.800z" /></svg>
      </div>
      <div className="w-[344px] h-[39px] mt-px bg-[#f0f0f0] flex items-center pl-[12px] relative">
        <Search className="w-[19px] h-[19px] text-[#222] -scale-x-100" strokeWidth={1.300} />
        <span className="ml-[9px] text-[14.700px] text-[#333]">Type here to search</span>
        <svg className="absolute right-[2px] top-[2px]" width="74" height="36" viewBox="0 0 74 36">
          <path d="M4 14 24 3 32 10 30 24 10 32 2 26z" fill="#d9141e" />
          <path d="M4 20 14 22 20 12 30 12M8 30l20-8M24 3l4 12" stroke="#f2c230" strokeWidth="1.200" fill="none" />
          <path d="M36 12c1-6 5-7 8-3l6-5 3 14 7 6c1 6-12 9-15 2-5 2-11-1-10-6z" fill="#0d8a3c" stroke="#f0e130" strokeWidth="1.700" />
          <circle cx="60" cy="6" r="3" fill="#f3a93c" /><circle cx="66" cy="11" r="3" fill="#f3a93c" /><circle cx="66" cy="4" r="3" fill="#f3a93c" />
          <circle cx="70" cy="21" r="1.500" fill="#7fdcef" />
          <path d="M24 28 25.500 31 29 32 25.500 33 24 36 22.500 33 19 32 22.500 31z" fill="#e88ee0" />
        </svg>
      </div>
      <div className={slot}><div className="w-[16px] h-[16px] rounded-full border-[3px] border-white" /></div>
      <div className={slot}>
        <svg width="16" height="16" viewBox="0 0 16 16" fill="none" stroke="#fff"><path d="M1 1h10M1 15h10M1 4h10v8H1zM14 1v3M14 7v2M14 12v3" /></svg>
      </div>
      <div className="w-[3px]" />
      <div className={slot}>
        <svg width="22" height="20" viewBox="0 0 22 20"><path d="M1 2h8l2 2h10v15H1z" fill="#f3c94e" /><path d="M1 6h20v13H1z" fill="#ffdf75" /><path d="M6 14h10v5H6z" fill="#3d8ed2" /><path d="M9 16h4v3H9z" fill="#ffdf75" /></svg>
        {under}
      </div>
      <div className={slot}>
        <svg width="24" height="24" viewBox="0 0 24 24"><path d="M12 1 24 10v13H0V10z" fill="#1c7fd4" /><path d="M0 10l12 8 12-8v13H0z" fill="#33aef0" /><path d="M3 6h18v7l-9 5-9-5z" fill="#bfe5fa" opacity=".35" /></svg>
      </div>
      <div className={slot}>
        <svg width="22" height="24" viewBox="0 0 22 24" fill="none"><path d="M7 6V3c0-2 8-2 8 0v3" stroke="#2aa1e3" strokeWidth="2" /><rect x="1" y="6" width="20" height="17" rx="2" fill="#f5f5f5" /><rect x="7" y="10" width="3.500" height="3.500" fill="#f25022" /><rect x="11" y="10" width="3.500" height="3.500" fill="#7fba00" /><rect x="7" y="14" width="3.500" height="3.500" fill="#00a4ef" /><rect x="11" y="14" width="3.500" height="3.500" fill="#ffb900" /></svg>
      </div>
      <div className={slot}>
        <svg width="24" height="24" viewBox="0 0 24 24"><circle cx="12" cy="12" r="12" fill="#1a7fc5" /><path d="M24 14c-1 6-6 10-11 10 3-1 6-4 4-8-2-3-8-3-9 1-1 2 0 5 2 7-6-2-10-8-9-13 2 3 8-7 16-4 4 1 7 4 7 7z" fill="#1b9de2" /><path d="M8 16c2-4 10-3 11 1 2 4-2 6-6 7 4-1 9-2 11-9-1-2-16-7-16 1z" fill="#4fd36b" opacity=".85" /><circle cx="14" cy="15" r="3.500" fill="#1c1c1c" /></svg>
      </div>
      <div className={`${slot} bg-[#3a3a3a]`}>
        <svg width="24" height="24" viewBox="0 0 24 24">
          <circle cx="12" cy="12" r="11" fill="#dd4b3e" />
          <path d="M12 12 2.500 17.500A11 11 0 0 0 12 23z" fill="#1da462" />
          <path d="M12 12 12 23A11 11 0 0 0 23 12z" fill="#fcc934" />
          <circle cx="12" cy="12" r="5" fill="#fff" /><circle cx="12" cy="12" r="4" fill="#4a90e2" />
        </svg>
        <div className="absolute left-[23px] top-[18px] w-[14px] h-[14px] rounded-full bg-[#4b2aa8] text-[8px] flex items-center justify-center">R</div>
        {under}
      </div>
      <div className={slot}>
        <div className="w-[24px] h-[24px] bg-[#ee7a27] rounded-[2px] flex items-center justify-center"><SiXampp className="w-[17px] h-[17px] text-white" /></div>
        {under}
      </div>
      <div className={slot}>
        <svg width="24" height="24" viewBox="0 0 24 24"><path d="M17 1 24 4v16l-7 3L7 13l-5 4-2-1.500V8.500L2 7l5 4zM17 7l-6 5 6 5z" fill="#0f84cf" /></svg>
        {under}
      </div>
      <div className="w-[115px]" />
      <svg width="26" height="24" viewBox="0 0 26 24"><path d="M6 17a5 5 0 0 1 0-10 7 7 0 0 1 13-1 5.500 5.500 0 0 1 1 11z" fill="#cfe6f5" /><path d="M14 14c1.500 3 3 5 3 6.500a3 3 0 0 1-6 0c0-1.500 1.500-3.500 3-6.500z" fill="#3fa0e0" /></svg>
      <span className="ml-[6px] text-[14px] w-[37px] whitespace-nowrap">25°C</span>
      <span className="text-[14px] w-[71px] whitespace-nowrap">Light rain</span>
      <ChevronUp className="w-[19px] h-[19px] text-[#eee]" strokeWidth={1.500} />
      <Wifi className="ml-[7px] w-[16px] h-[16px] text-[#ddd] rotate-45" strokeWidth={1.500} />
      <BatteryMedium className="ml-[6px] w-[18px] h-[18px] text-[#eee]" strokeWidth={1.500} />
      <svg className="ml-[7px]" width="15" height="18" viewBox="0 0 15 18" fill="none" stroke="#ddd"><path d="M1 3h8v12H1zM9 7l5-2v8l-5-2" /></svg>
      <Volume2 className="ml-[8px] w-[17px] h-[17px] text-[#ddd]" strokeWidth={1.200} />
      <span className="ml-[10px] text-[12px] w-[32px]">ENG</span>
      <div className="w-[70px] flex flex-col items-center text-[12.500px] leading-[18px]">
        <span>11:22</span>
        <span>16-09-2022</span>
      </div>
      <div className="ml-[11px] relative">
        <svg width="17" height="16" viewBox="0 0 17 16"><path d="M0 0h17v12H7l-3 3v-3H0z" fill="#fff" /><path d="M3 3h11M3 6h11M3 9h7" stroke="#555" /></svg>
        <div className="absolute left-[7px] top-[6px] w-[15px] h-[15px] rounded-full bg-[#2b2b2b] border border-[#bbb] text-[10px] flex items-center justify-center">1</div>
      </div>
    </div>
  );
}

export default function App() {
  return (
    <div className="w-[1366px] h-[768px] overflow-hidden flex flex-col font-['Roboto',sans-serif]">
      <TabStrip />
      <Toolbar />
      <Bookmarks />
      <PdfToolbar />
      <div className="flex-1 min-h-0 flex overflow-hidden">
        <Sidebar />
        <div className="flex-1 bg-[#424548] pl-[5px] pt-[2px] overflow-hidden">
          <Slide />
        </div>
        <Scrollbar thumb="mt-[35px] h-[18px]" />
      </div>
      <Taskbar />
    </div>
  );
}
